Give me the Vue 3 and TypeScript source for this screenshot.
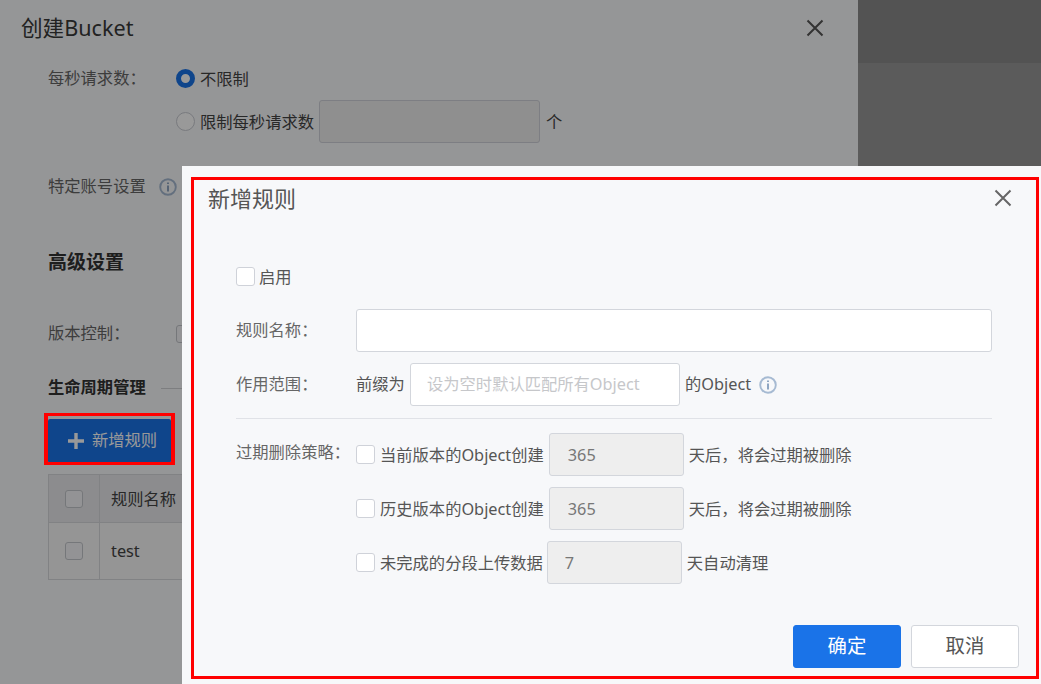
<script setup lang="ts">
interface Rule { before: string; value: string; after: string }
const rules: Rule[] = [
  { before: '当前版本的Object创建', value: '365', after: '天后，将会过期被删除' },
  { before: '历史版本的Object创建', value: '365', after: '天后，将会过期被删除' },
  { before: '未完成的分段上传数据', value: '7', after: '天自动清理' },
]
</script>

<template>
  <div class="screen">
    <div class="page">
      <section class="panel">
        <header class="panel-head">
          <span class="panel-title">创建Bucket</span>
          <svg class="close dim-close" viewBox="0 0 18 18"><path d="M1.5 1.5 16.5 16.5M16.5 1.5 1.5 16.5" /></svg>
        </header>
        <div class="panel-body">
          <div class="p-row r1">
            <span class="p-label">每秒请求数：</span>
            <span class="radio on"></span>
            <span class="p-text">不限制</span>
          </div>
          <div class="p-row r2">
            <span class="p-label"></span>
            <span class="radio"></span>
            <span class="p-text">限制每秒请求数</span>
            <span class="p-input"></span>
            <span class="p-text unit">个</span>
          </div>
          <div class="p-row r3">
            <span class="p-label-auto">特定账号设置</span>
            <svg class="info" viewBox="0 0 18 18"><circle cx="9" cy="9" r="7.8" /><path d="M9 7.6V13.4" /><path d="M9 4.4V6" /></svg>
          </div>
          <h3 class="adv">高级设置</h3>
          <div class="p-row r4">
            <span class="p-label">版本控制：</span>
            <span class="check dim"></span>
          </div>
          <div class="p-row r5">
            <strong class="life">生命周期管理</strong>
            <span class="life-line"></span>
          </div>
          <button class="add" type="button">
            <svg class="plus" viewBox="0 0 16 16"><path d="M8 0V16M0 8H16" /></svg>
            <span>新增规则</span>
          </button>
          <div class="table">
            <div class="t-row t-head">
              <div class="t-check"><span class="check dim"></span></div>
              <div class="t-cell">规则名称</div>
            </div>
            <div class="t-row t-data">
              <div class="t-check"><span class="check dim"></span></div>
              <div class="t-cell">test</div>
            </div>
          </div>
        </div>
      </section>
      <aside class="side">
        <div class="side-top"></div>
      </aside>
    </div>

    <div class="backdrop"></div>

    <section class="modal">
      <header class="m-head">
        <span class="m-title">新增规则</span>
        <svg class="close" viewBox="0 0 18 18"><path d="M1.5 1.5 16.5 16.5M16.5 1.5 1.5 16.5" /></svg>
      </header>
      <div class="m-body">
        <label class="enable"><span class="check"></span><span class="nudge">启用</span></label>
        <div class="f-row name">
          <span class="f-label">规则名称：</span>
          <span class="field grow"></span>
        </div>
        <div class="f-row scope">
          <span class="f-label">作用范围：</span>
          <span class="prefix">前缀为</span>
          <span class="field prefix-field">设为空时默认匹配所有Object</span>
          <span class="suffix">的Object</span>
          <svg class="info light" viewBox="0 0 18 18"><circle cx="9" cy="9" r="7.8" /><path d="M9 7.6V13.4" /><path d="M9 4.4V6" /></svg>
        </div>
        <div class="divider"></div>
        <div class="policy">
          <span class="f-label policy-label">过期删除策略：</span>
          <div class="policy-rows">
            <div v-for="r in rules" :key="r.before" class="p-rule">
              <span class="check"></span>
              <span class="rule-text nudge">{{ r.before }}</span>
              <span class="field disabled">{{ r.value }}</span>
              <span class="rule-after nudge">{{ r.after }}</span>
            </div>
          </div>
        </div>
      </div>
      <footer class="m-foot">
        <button class="btn primary" type="button">确定</button>
        <button class="btn" type="button">取消</button>
      </footer>
    </section>

    <div class="mark mark-modal"></div>
    <div class="mark mark-add"></div>
  </div>
</template>

<style>
html, body { margin: 0; padding: 0; }
</style>

<style scoped>
.screen {
  position: relative;
  width: 1041px;
  height: 684px;
  overflow: hidden;
  font-family: "Noto Sans", "Noto Sans CJK SC", sans-serif;
  font-size: 16.3px;
  line-height: 1.2;
  color: #555;
}
.nudge { padding-top: 2px; }
.page { display: flex; height: 684px; }
.panel { width: 858px; flex: none; background: #f9fafc; }
.side { flex: 1; background: #989898; }
.side-top { height: 63px; background: #8a8a8a; }
.panel-head {
  display: flex;
  align-items: center;
  justify-content: space-between;
  height: 56px;
  padding: 0 34px 0 21px;
}
.panel-title { font-size: 21.6px; color: #3a3a3a; }
.dim-close path { stroke: #555 !important; }
.panel-body { padding-left: 48px; }
.p-row { display: flex; align-items: center; }
.r1 { margin-top: 13px; height: 19px; }
.r2 { margin-top: 12px; height: 43px; }
.r3 { margin-top: 32px; height: 24px; }
.r4 { margin-top: 46px; height: 24px; }
.r5 { margin-top: 30px; height: 24px; }
.p-label { width: 128px; flex: none; color: #666; }
.p-label-auto { color: #666; }
.p-text { margin-left: 5px; padding-top: 2px; color: #444; }
.unit { margin-left: 6px; }
.radio {
  box-sizing: border-box;
  width: 19px;
  height: 19px;
  border-radius: 50%;
  border: 1px solid #c9ccd3;
  background: #fff;
  flex: none;
}
.radio.on { border: 5px solid #1a73e8; }
.p-input {
  box-sizing: border-box;
  width: 221px;
  height: 43px;
  margin-left: 5px;
  background: #eeeeee;
  border: 1px solid #d0d3da;
  border-radius: 3px;
}
.info { width: 18px; height: 18px; margin-left: 13px; flex: none; }
.info circle, .info path { fill: none; stroke: #a6bad2; stroke-width: 1.9; }
.info path { stroke-width: 2; stroke: #8fa6c2; }
.adv { margin: 49px 0 0; height: 28px; line-height: 28px; font-size: 19px; font-weight: 700; color: #333; }
.check {
  display: block;
  box-sizing: border-box;
  width: 19px;
  height: 19px;
  flex: none;
  background: #fff;
  border: 1px solid #cfd2d9;
  border-radius: 3px;
}
.check.dim { width: 18px; height: 18px; background: #f6f6f8; border-color: #c4c6cb; }
.life { width: 113px; flex: none; font-size: 16.3px; font-weight: 700; color: #333; white-space: nowrap; }
.life-line { width: 40px; height: 1px; background: #d0d2d6; }
.add {
  display: flex;
  align-items: center;
  gap: 8px;
  box-sizing: border-box;
  width: 123px;
  height: 44px;
  margin-top: 19px;
  padding: 0 0 0 20px;
  border: 0;
  border-radius: 2px;
  background: #1a73e8;
  color: #fff;
  font: inherit;
}
.plus { width: 16px; height: 16px; flex: none; }
.plus path { stroke: #fff; stroke-width: 3.4; fill: none; }
.table { margin-top: 11px; width: 760px; border: 1px solid #d8d9dc; box-sizing: border-box; }
.t-row { display: flex; }
.t-head { height: 47px; background: #e9eaed; border-bottom: 1px solid #d8d9dc; }
.t-data { height: 56px; background: #f8f8f8; }
.t-check {
  box-sizing: border-box;
  width: 51px;
  flex: none;
  display: flex;
  align-items: center;
  justify-content: center;
  padding-right: 1px;
  border-right: 1px solid #d8d9dc;
}
.t-cell { display: flex; align-items: center; padding: 2px 0 0 11px; color: #444; }
.backdrop { position: absolute; inset: 0; background: rgba(0, 0, 0, 0.4); }
.modal {
  position: absolute;
  left: 182px;
  top: 166px;
  right: 0;
  bottom: 0;
  background: #f7f8fa;
}
.m-head {
  display: flex;
  align-items: center;
  justify-content: space-between;
  height: 64px;
  padding: 0 29px 0 26px;
}
.m-title { font-size: 22px; color: #555; }
.close { width: 18px; height: 18px; flex: none; }
.close path { stroke: #666; stroke-width: 2; fill: none; }
.m-body { padding: 37px 49px 0 54px; }
.enable { display: flex; align-items: center; gap: 4px; height: 19px; color: #555; }
.f-row { display: flex; align-items: center; height: 43px; }
.name { margin-top: 23px; }
.scope { margin-top: 11px; }
.f-label { width: 120px; flex: none; color: #666; }
.field {
  box-sizing: border-box;
  display: flex;
  align-items: center;
  height: 43px;
  background: #fff;
  border: 1px solid #d3d6dc;
  border-radius: 3px;
}
.grow { flex: 1; }
.prefix { width: 54px; flex: none; color: #555; }
.prefix-field { width: 270px; padding-left: 16px; color: #c6c7ca; white-space: nowrap; }
.suffix { margin-left: 5px; color: #555; }
.info.light { margin-left: 8px; }
.divider { height: 1px; margin: 12px 0 14px; background: #e0e2e7; }
.policy { display: flex; }
.policy-label { height: 43px; line-height: 38px; }
.policy-rows { display: flex; flex-direction: column; gap: 11px; }
.p-rule { display: flex; align-items: center; height: 43px; }
.rule-text { margin-left: 5px; color: #555; white-space: nowrap; }
.field.disabled {
  width: 135px;
  margin: 0 5px;
  padding: 2px 0 0 18px;
  background: #eeeeee;
  color: #777;
}
.p-rule:last-child .field.disabled { margin-left: 4px; padding-left: 17px; }
.rule-after { color: #555; white-space: nowrap; }
.m-foot {
  display: flex;
  justify-content: flex-end;
  gap: 10px;
  margin-top: 41px;
  padding-right: 22px;
}
.btn {
  box-sizing: border-box;
  width: 108px;
  height: 43px;
  border: 1px solid #d3d6dc;
  border-radius: 3px;
  background: #fff;
  color: #555;
  font: inherit;
  font-size: 19.4px;
  line-height: 1.2;
  padding: 0 0 2px;
}
.btn.primary { background: #1a73e8; border-color: #1a73e8; color: #fff; }
.mark { position: absolute; box-sizing: border-box; border-style: solid; border-color: #f00; pointer-events: none; }
.mark-modal { left: 191px; top: 177px; width: 848px; height: 502px; border-width: 3px; }
.mark-add { left: 44px; top: 413px; width: 131px; height: 52px; border-width: 3px 4px; }
</style>
